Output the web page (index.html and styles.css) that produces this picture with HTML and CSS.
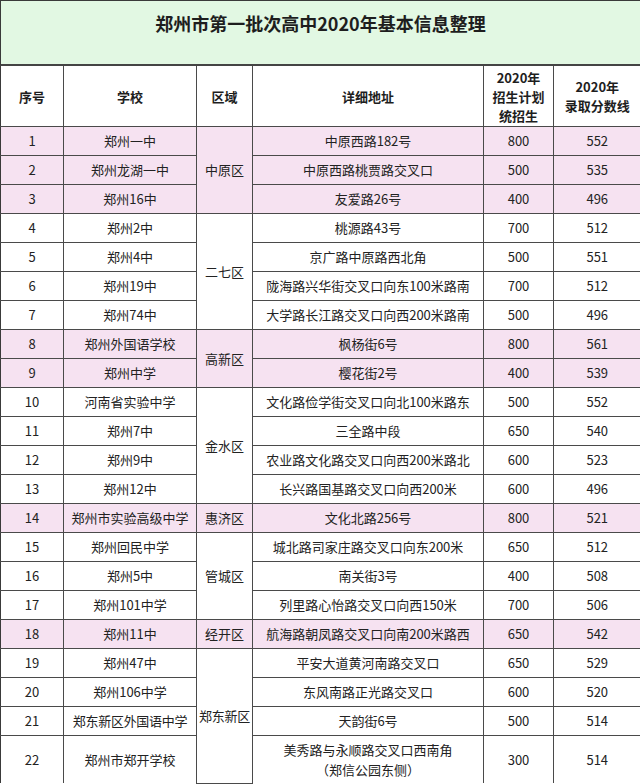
FILE: index.html
```html
<!DOCTYPE html>
<html lang="zh-CN">
<head>
<meta charset="utf-8">
<title>郑州市第一批次高中2020年基本信息整理</title>
<link rel="stylesheet" href="styles.css">
</head>
<body>
<div class="sheet">
  <div class="title">郑州市第一批次高中2020年基本信息整理</div>
  <table class="grid">
    <colgroup>
      <col class="c-no"><col class="c-school"><col class="c-area"><col class="c-addr"><col class="c-plan"><col class="c-score">
    </colgroup>
    <thead>
      <tr class="head">
        <th>序号</th><th>学校</th><th>区域</th><th>详细地址</th>
        <th>2020年<br>招生计划<br>统招生</th><th>2020年<br>录取分数线</th>
      </tr>
    </thead>
    <tbody>
      <tr class="pink"><td>1</td><td>郑州一中</td><td rowspan="3">中原区</td><td>中原西路182号</td><td>800</td><td>552</td></tr>
      <tr class="pink"><td>2</td><td>郑州龙湖一中</td><td>中原西路桃贾路交叉口</td><td>500</td><td>535</td></tr>
      <tr class="pink"><td>3</td><td>郑州16中</td><td>友爱路26号</td><td>400</td><td>496</td></tr>
      <tr><td>4</td><td>郑州2中</td><td rowspan="4">二七区</td><td>桃源路43号</td><td>700</td><td>512</td></tr>
      <tr><td>5</td><td>郑州4中</td><td>京广路中原路西北角</td><td>500</td><td>551</td></tr>
      <tr><td>6</td><td>郑州19中</td><td>陇海路兴华街交叉口向东100米路南</td><td>700</td><td>512</td></tr>
      <tr><td>7</td><td>郑州74中</td><td>大学路长江路交叉口向西200米路南</td><td>500</td><td>496</td></tr>
      <tr class="pink"><td>8</td><td>郑州外国语学校</td><td rowspan="2">高新区</td><td>枫杨街6号</td><td>800</td><td>561</td></tr>
      <tr class="pink"><td>9</td><td>郑州中学</td><td>樱花街2号</td><td>400</td><td>539</td></tr>
      <tr><td>10</td><td>河南省实验中学</td><td rowspan="4">金水区</td><td>文化路俭学街交叉口向北100米路东</td><td>500</td><td>552</td></tr>
      <tr><td>11</td><td>郑州7中</td><td>三全路中段</td><td>650</td><td>540</td></tr>
      <tr><td>12</td><td>郑州9中</td><td>农业路文化路交叉口向西200米路北</td><td>600</td><td>523</td></tr>
      <tr><td>13</td><td>郑州12中</td><td>长兴路国基路交叉口向西200米</td><td>600</td><td>496</td></tr>
      <tr class="pink"><td>14</td><td>郑州市实验高级中学</td><td>惠济区</td><td>文化北路256号</td><td>800</td><td>521</td></tr>
      <tr><td>15</td><td>郑州回民中学</td><td rowspan="3">管城区</td><td>城北路司家庄路交叉口向东200米</td><td>650</td><td>512</td></tr>
      <tr><td>16</td><td>郑州5中</td><td>南关街3号</td><td>400</td><td>508</td></tr>
      <tr><td>17</td><td>郑州101中学</td><td>列里路心怡路交叉口向西150米</td><td>700</td><td>506</td></tr>
      <tr class="pink"><td>18</td><td>郑州11中</td><td>经开区</td><td>航海路朝凤路交叉口向南200米路西</td><td>650</td><td>542</td></tr>
      <tr><td>19</td><td>郑州47中</td><td rowspan="4" class="tight">郑东新区</td><td>平安大道黄河南路交叉口</td><td>650</td><td>529</td></tr>
      <tr><td>20</td><td>郑州106中学</td><td>东风南路正光路交叉口</td><td>600</td><td>520</td></tr>
      <tr><td>21</td><td class="tight">郑东新区外国语中学</td><td>天韵街6号</td><td>500</td><td>514</td></tr>
      <tr class="last"><td>22</td><td>郑州市郑开学校</td><td>美秀路与永顺路交叉口西南角<br>（郑信公园东侧）</td><td>300</td><td>514</td></tr>
    </tbody>
  </table>
</div>
</body>
</html>
```
FILE: styles.css
```css
html, body {
  margin: 0;
  padding: 0;
  background: #ffffff;
}

body {
  font-family: "Noto Sans CJK SC", "Noto Sans", "Liberation Sans", sans-serif;
  color: #222222;
}

.sheet {
  width: 640px;
  height: 784px;
  overflow: hidden;
}

.title {
  box-sizing: border-box;
  height: 66px;
  padding-top: 9px;
  background: #e2f8e3;
  border-top: 1px solid #3a3a3a;
  border-left: 1px solid #3a3a3a;
  border-bottom: 2px solid #444444;
  text-align: center;
  font-size: 18px;
  font-weight: 700;
  line-height: 26px;
  color: #1e1e1e;
}

.grid {
  width: 640px;
  table-layout: fixed;
  border-collapse: collapse;
  font-size: 13px;
}

.c-no { width: 63px; }
.c-school { width: 133px; }
.c-area { width: 56px; }
.c-addr { width: 231px; }
.c-plan { width: 70px; }
.c-score { width: 87px; }

.grid th,
.grid td {
  border: 1px solid #4a4a4a;
  padding: 0;
  text-align: center;
  vertical-align: middle;
  white-space: nowrap;
  overflow: visible;
}

.grid th:first-child,
.grid td:first-child {
  border-left: 1px solid #3a3a3a;
}

.grid tr > :last-child {
  border-right: none;
}

.grid .head th {
  height: 60px;
  font-weight: 700;
  line-height: 19px;
  color: #1e1e1e;
  border-top: none;
}

.grid tbody td {
  height: 28px;
  line-height: 18px;
}

.grid tbody tr.last td {
  height: 47px;
  line-height: 20px;
  border-bottom: none;
}

.grid tr.pink td {
  background: #f6e2f1;
}

.grid td.tight {
  letter-spacing: -0.3px;
}
```
